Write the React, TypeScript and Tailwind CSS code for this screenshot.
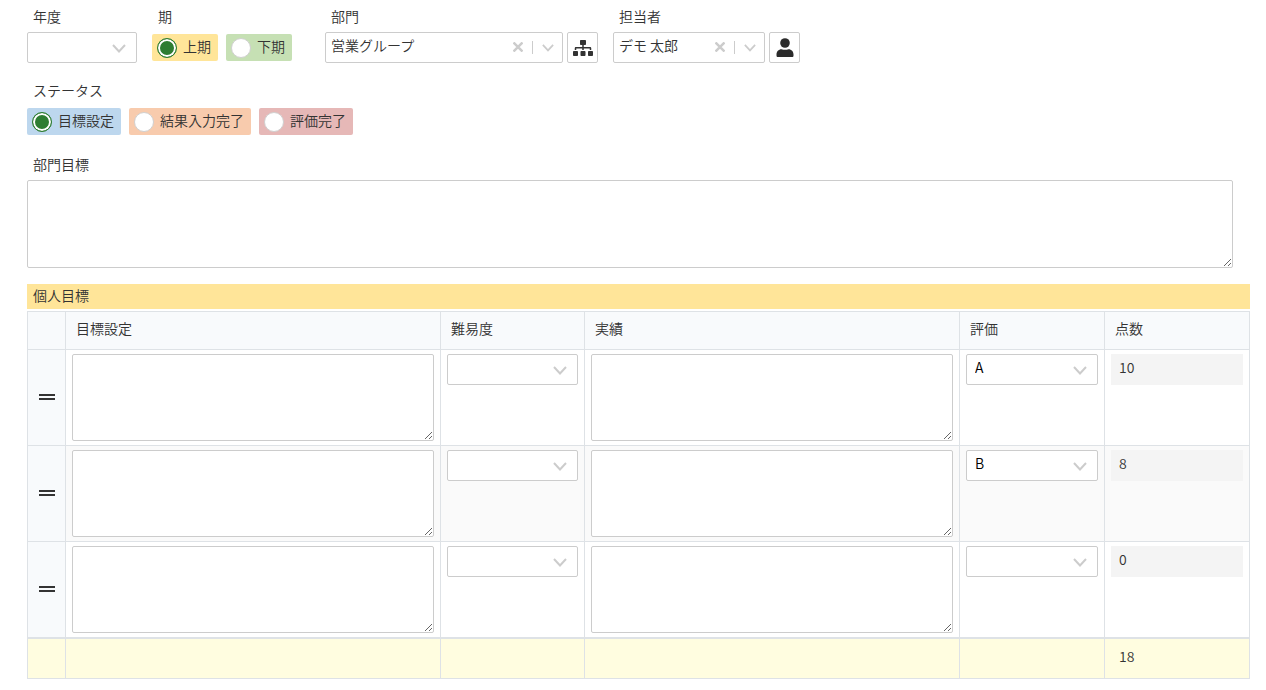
import { ReactNode } from 'react';
import { FaSitemap } from 'react-icons/fa';

interface FieldProps {
  label: string;
  htmlFor?: string;
  className?: string;
  children: ReactNode;
}

interface ChipProps {
  name: string;
  label: string;
  color: string;
  checked?: boolean;
}

interface SelectProps {
  id?: string;
  label?: string;
  options: string[];
  value?: string;
}

const goals = [
  { score: 10, rank: 'A' },
  { score: 8, rank: 'B' },
  { score: 0, rank: '' },
];

const total = goals.reduce((sum, goal) => sum + goal.score, 0);

const Chevron = ({ className }: { className: string }) => (
  <svg
    viewBox="0 0 14 9"
    className={`${className} pointer-events-none absolute`}
    fill="none"
    stroke="#cccccc"
    strokeWidth="2"
    aria-hidden="true"
  >
    <path d="M1 1l6 6.500 6-6.500" />
  </svg>
);

const Field = ({ label, htmlFor, className = '', children }: FieldProps) => (
  <div className={className}>
    {htmlFor ? (
      <label htmlFor={htmlFor} className="block pl-[6px] mb-[6px]">
        {label}
      </label>
    ) : (
      <span className="block pl-[6px] mb-[6px]">{label}</span>
    )}
    {children}
  </div>
);

const Chip = ({ name, label, color, checked }: ChipProps) => (
  <label className={`${color} flex items-center h-[27px] pl-[5px] pr-[7px] gap-[6px] rounded-xs`}>
    <input
      type="radio"
      name={name}
      defaultChecked={checked}
      className="appearance-none size-5 rounded-full bg-white border border-[#d0d0d0] checked:border-[#2e7d32] checked:bg-[#2e7d32] checked:shadow-[inset_0_0_0_2px_#ffffff]"
    />
    <span className="pb-[3px]">{label}</span>
  </label>
);

// plain dropdown used in the form and in the table
const Select = ({ id, label, options, value = '' }: SelectProps) => (
  <div className="relative">
    <select
      id={id}
      aria-label={label}
      defaultValue={value}
      className="block appearance-none w-full h-[31px] pl-2 pr-8 pb-[5px] bg-white border border-[#cccccc] rounded-xs text-black"
    >
      {options.map((option) => (
        <option key={option}>{option}</option>
      ))}
    </select>
    <Chevron className="right-[11px] top-3 w-[14px]" />
  </div>
);

// dropdown with a clear button
const ClearableSelect = ({ id, options, value }: SelectProps) => (
  <div className="relative flex-1">
    <select
      id={id}
      defaultValue={value}
      className="block appearance-none w-full h-[31px] pl-[5px] pr-14 pb-[5px] bg-white border border-[#cccccc] rounded-xs"
    >
      {options.map((option) => (
        <option key={option}>{option}</option>
      ))}
    </select>
    <button type="button" aria-label="クリア" className="absolute right-[39px] top-[9px] p-px">
      <svg viewBox="0 0 10 10" className="size-[10px]" stroke="#cccccc" strokeWidth="2.500">
        <path d="M0.500 0.500l9 9M9.500 0.500l-9 9" />
      </svg>
    </button>
    <span className="absolute right-[30px] top-[9px] h-[13px] w-px bg-[#cccccc]" />
    <Chevron className="right-[9px] top-3 w-3" />
  </div>
);

const IconButton = ({ label, children }: { label: string; children: ReactNode }) => (
  <button
    type="button"
    aria-label={label}
    className="flex items-center justify-center size-[31px] border border-[#cccccc] rounded-xs"
  >
    {children}
  </button>
);

const TextArea = ({ id, label, className }: { id?: string; label?: string; className: string }) => (
  <textarea
    id={id}
    aria-label={label}
    className={`${className} block w-full resize bg-white border border-[#cccccc] rounded-xs px-2 py-1`}
  />
);

const App = () => {
  const cell = 'border border-[#dee2e6] px-[6px] py-1 align-top';
  const head = 'border border-[#dee2e6] px-[10px] pb-[5px] font-[350] text-left';

  return (
    <main className="pl-[27px] pr-4 pt-[6px] pb-3 bg-white text-[#333333] text-sm font-[350] font-['Noto_Sans_CJK_JP',sans-serif]">
      <div className="flex flex-wrap gap-x-[15px]">
        <Field label="年度" htmlFor="year" className="w-[110px]">
          <Select id="year" options={['']} />
        </Field>
        <Field label="期" className="pr-[18px]">
          <div className="flex items-center gap-2 h-[31px]">
            <Chip name="term" label="上期" color="bg-[#ffe599]" checked />
            <Chip name="term" label="下期" color="bg-[#c6e0b4]" />
          </div>
        </Field>
        <Field label="部門" htmlFor="department" className="w-[273px]">
          <div className="flex gap-1">
            <ClearableSelect id="department" options={['営業グループ']} value="営業グループ" />
            <IconButton label="組織選択">
              <FaSitemap className="size-5" />
            </IconButton>
          </div>
        </Field>
        <Field label="担当者" htmlFor="person" className="w-[187px]">
          <div className="flex gap-1">
            <ClearableSelect id="person" options={['デモ 太郎']} value="デモ 太郎" />
            <IconButton label="ユーザー選択">
              <svg viewBox="0 0 18 20" className="h-5" fill="#2b2b2b" aria-hidden="true">
                <circle cx="9" cy="5" r="4.800" />
                <path d="M5.500 11.200q3.500 1 7 0c3 0 5 2.300 5 5.300v1c0 1-.5 1.500-1.500 1.500H2c-1 0-1.500-.5-1.500-1.500v-1c0-3 2-5.300 5-5.300z" />
              </svg>
            </IconButton>
          </div>
        </Field>
      </div>

      <Field label="ステータス" className="mt-[17px]">
        <div className="flex items-center gap-2 h-[31px]">
          <Chip name="status" label="目標設定" color="bg-[#bdd7ee]" checked />
          <Chip name="status" label="結果入力完了" color="bg-[#f8cbad]" />
          <Chip name="status" label="評価完了" color="bg-[#e6b8b7]" />
        </div>
      </Field>

      <Field label="部門目標" htmlFor="department-goal" className="mt-[17px] pr-[17px]">
        <TextArea id="department-goal" className="h-[88px]" />
      </Field>

      <h2 className="mt-4 mb-[2px] h-[25px] pl-[6px] leading-[22px] bg-[#ffe599]">個人目標</h2>

      <table className="w-full table-fixed border-collapse">
        <colgroup>
          <col className="w-[38px]" />
          <col />
          <col className="w-[144px]" />
          <col />
          <col className="w-[145px]" />
          <col className="w-[145px]" />
        </colgroup>
        <thead>
          <tr className="h-[38px] bg-[#f8fafc]">
            <td className={head} />
            <th className={head}>目標設定</th>
            <th className={head}>難易度</th>
            <th className={head}>実績</th>
            <th className={head}>評価</th>
            <th className={head}>点数</th>
          </tr>
        </thead>
        <tbody>
          {goals.map((goal, i) => (
            <tr key={i} className="even:bg-[#fafafa]">
              <td className="border border-[#dee2e6] bg-[#f8fafc] pb-[2px]">
                <svg viewBox="0 0 16 6" className="mx-auto w-4" fill="#333333" aria-hidden="true">
                  <path d="M0 0h16v2H0zM0 4h16v2H0z" />
                </svg>
              </td>
              <td className={cell}>
                <TextArea label="目標設定" className="h-[87px]" />
              </td>
              <td className={cell}>
                <Select label="難易度" options={['']} />
              </td>
              <td className={cell}>
                <TextArea label="実績" className="h-[87px]" />
              </td>
              <td className={cell}>
                <Select label="評価" options={['', 'A', 'B']} value={goal.rank} />
              </td>
              <td className={cell}>
                <div className="h-[31px] px-2 pt-[3px] bg-[#f4f4f4]">{goal.score}</div>
              </td>
            </tr>
          ))}
        </tbody>
        <tfoot>
          <tr className="h-10 bg-[#fffde0] border-t-2 border-[#dee2e6]">
            <td className="border border-[#dee2e6]" />
            <td className="border border-[#dee2e6]" />
            <td className="border border-[#dee2e6]" />
            <td className="border border-[#dee2e6]" />
            <td className="border border-[#dee2e6]" />
            <td className="border border-[#dee2e6] px-[14px] pb-[5px]">{total}</td>
          </tr>
        </tfoot>
      </table>
    </main>
  );
};

export default App;
